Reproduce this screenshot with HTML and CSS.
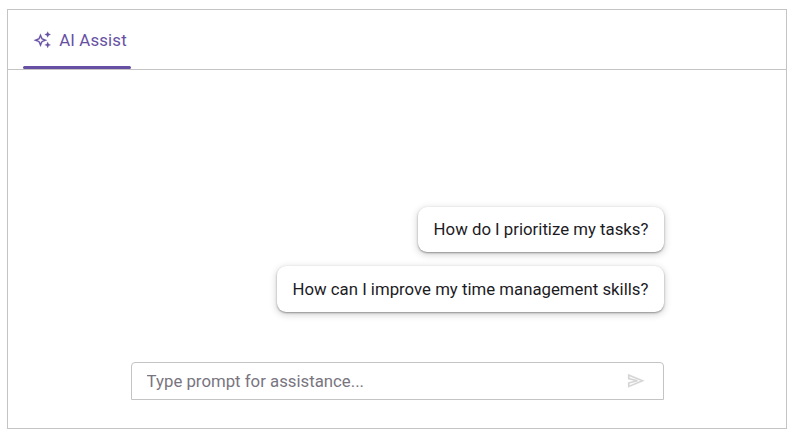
FILE: index.html
```
<!DOCTYPE html>
<html lang="en">
<head>
<meta charset="utf-8">
<title>AI Assist</title>
<link rel="stylesheet" href="styles.css">
</head>
<body>
<main class="assist">
  <header class="toolbar">
    <div class="tab">
      <svg class="tab-icon" viewBox="0 0 18 18"><path fill-rule="evenodd" d="M6.5 2.7 8.4 7.3 13 9.2 8.4 11.1 6.5 15.7 4.6 11.1 -.2 9.2 4.6 7.3ZM6.5 6.1 5.5 8.2 3.4 9.2 5.5 10.2 6.5 12.3 7.5 10.2 9.6 9.2 7.5 8.2Z"/><path d="M13.7 0.6 14.6 2.6 16.7 3.5 14.6 4.4 13.7 6.4 12.8 4.4 10.7 3.5 12.8 2.6ZM13.7 10.8 14.6 13 16.7 13.9 14.6 14.8 13.7 16.9 12.8 14.8 10.7 13.9 12.8 13Z"/></svg>
      <span class="tab-text">AI Assist</span>
    </div>
  </header>
  <section class="content">
    <ul class="suggestions">
      <li class="suggestion">How do I prioritize my tasks?</li>
      <li class="suggestion suggestion-last">How can I improve my time management skills?</li>
    </ul>
    <div class="prompt">
      <input class="prompt-input" type="text" placeholder="Type prompt for assistance...">
      <svg class="send" viewBox="0 0 17 14"><path fill-rule="evenodd" d="M0 0 16.4 6.8 0 13.6V8.4L6.5 6.8 0 5.2ZM1.5 2.2V4.1L9.5 6.1V7.5L1.5 9.5V11.4L12.7 6.8Z"/></svg>
    </div>
  </section>
</main>
</body>
</html>
```
FILE: styles.css
```
* { box-sizing: border-box; }
body {
  margin: 0;
  background: #fff;
  font: 16.8px/24px Roboto, sans-serif;
  color: #1c1b1f;
}
.assist {
  width: 780px;
  height: 420px;
  margin: 9px 0 0 7px;
  border: 1px solid #c4c4c4;
}
.toolbar {
  display: flex;
  height: 60px;
  padding-left: 14.6px;
  border-bottom: 1px solid #c4c4c4;
}
.tab {
  position: relative;
  display: flex;
  align-items: center;
  width: 108.8px;
  height: 59px;
  padding: 0 0 0 11.2px;
  color: #6750a4;
}
.tab::after {
  content: "";
  position: absolute;
  left: 0;
  bottom: 0;
  width: 100%;
  height: 3px;
  border-radius: 2px;
  background: #6750a4;
}
.tab-icon {
  width: 18px;
  height: 18px;
  margin-top: 1px;
  fill: currentColor;
  stroke: currentColor;
  stroke-width: 0.2px;
  overflow: visible;
}
.tab-text { margin-left: 7.4px; letter-spacing: 0.16px; white-space: nowrap; }
.content {
  width: 533px;
  margin-left: 123px;
  padding-top: 137px;
}
.suggestions {
  display: flex;
  flex-direction: column;
  align-items: flex-end;
  gap: 14px;
  margin: 0 0 50px;
  padding: 0;
  list-style: none;
}
.suggestion {
  display: flex;
  align-items: center;
  height: 45px;
  padding: 0 15.6px 2px;
  border-radius: 9px;
  box-shadow: 0 1px 2px rgba(0, 0, 0, 0.36), 0 2px 7px 1px rgba(0, 0, 0, 0.16);
  white-space: nowrap;
}
.suggestion-last { height: 46px; padding-bottom: 1px; }
.prompt {
  display: flex;
  align-items: center;
  height: 38px;
  padding: 0 18px 0 14.6px;
  border: 1px solid #c4c4c4;
  border-radius: 4px 4px 0 0;
}
.prompt-input {
  flex: 1;
  min-width: 0;
  height: 36px;
  padding: 0;
  border: 0;
  outline: 0;
  background: none;
  font: inherit;
}
.prompt-input::placeholder { color: #79757f; opacity: 1; }
.send { width: 17px; height: 14px; fill: #d5d4d6; stroke: #d5d4d6; stroke-width: 0.2px; overflow: visible; }
```
